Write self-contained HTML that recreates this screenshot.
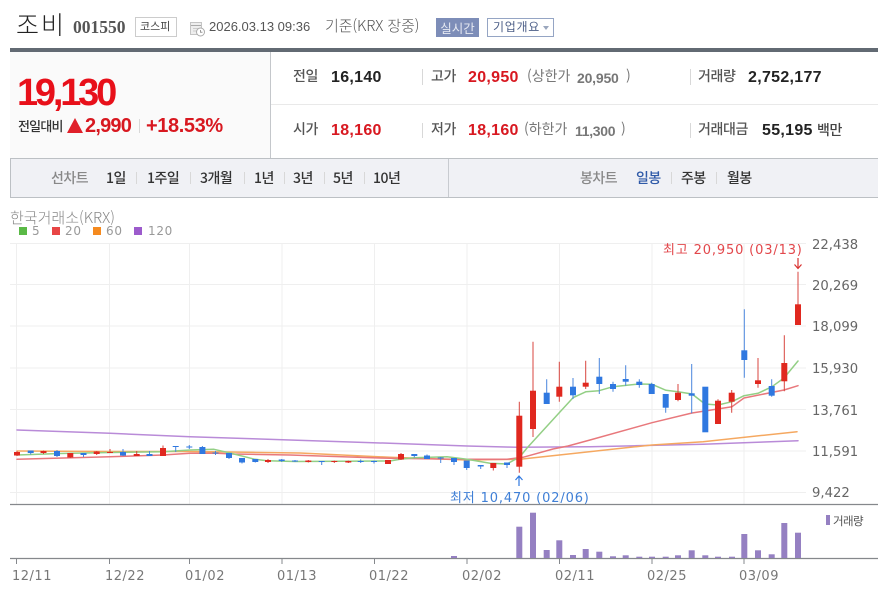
<!DOCTYPE html>
<html lang="ko"><head><meta charset="utf-8"><title>조비</title>
<style>
html,body{margin:0;padding:0;background:#fff}
body{width:878px;height:596px;overflow:hidden;position:relative;font-family:"Liberation Sans","NanumGothic","Noto Sans CJK KR",sans-serif}
#w{position:absolute;left:0;top:0;width:878px;height:596px;overflow:hidden;filter:blur(.35px)}
.t{position:absolute;white-space:nowrap;line-height:1}
.b{position:absolute}
.k{font-family:"Noto Sans CJK KR","NanumGothic",sans-serif}
.lbl{font-size:14px;font-weight:500;color:#555;letter-spacing:-.4px;font-family:"Noto Sans CJK KR",sans-serif}
.v{font-size:16px;font-weight:700;color:#222;letter-spacing:.3px}
.r{color:#d81820}
.g{font-size:14px;color:#777;font-weight:700}
.bar{position:absolute;width:1px;background:#d8d8d8}
.m{font-size:14px;font-weight:500;color:#333;letter-spacing:-.5px;font-family:"Noto Sans CJK KR",sans-serif}
svg text{font-family:"DejaVu Sans",sans-serif}
</style></head><body><div id="w">

<div class="t k" style="left:16px;top:12px;font-size:25px;font-weight:300;color:#222;letter-spacing:2px">조비</div>
<div class="t" style="left:73px;top:19px;font-family:'Liberation Serif',serif;font-weight:700;font-size:17.5px;color:#555">001550</div>
<div class="b" style="left:135px;top:17px;width:42px;height:20px;border:1px solid #ccc;box-sizing:border-box"></div>
<div class="t k" style="left:140px;top:21px;font-size:11px;color:#444">코스피</div>
<svg class="b" style="left:190px;top:22px" width="16" height="15" viewBox="0 0 16 15"><rect x=".5" y=".5" width="11" height="12" fill="#eee" stroke="#c4c4c4"/><line x1="1" y1="3.5" x2="11" y2="3.5" stroke="#aaa"/><line x1="3" y1="6.5" x2="8" y2="6.5" stroke="#ccc"/><line x1="3" y1="9" x2="6" y2="9" stroke="#ccc"/><circle cx="10.5" cy="10" r="4" fill="#fff" stroke="#aaa"/><path d="M10.5 8v2.3h2" fill="none" stroke="#999"/></svg>
<div class="t" style="left:209px;top:20px;font-size:13px;color:#555">2026.03.13 09:36</div>
<div class="t k" style="left:325px;top:18px;font-size:15px;font-weight:300;color:#555;letter-spacing:-.1px">기준(KRX 장중)</div>
<div class="t k" style="left:436px;top:18px;width:43px;height:19px;line-height:19px;background:#7d8db8;color:#e6e9f2;font-size:12.5px;text-align:center">실시간</div>
<div class="b" style="left:487px;top:18px;width:67px;height:19px;border:1px solid #95a5c4;box-sizing:border-box"></div>
<div class="t k" style="left:493px;top:21px;font-size:12px;color:#4d5f88;letter-spacing:.7px">기업개요</div>
<div class="b" style="left:543px;top:26px;border:3.5px solid transparent;border-top:4px solid #9aa6bd;border-bottom:0"></div>

<div class="b" style="left:10px;top:48px;width:868px;height:4px;background:#626a73"></div>
<div class="b" style="left:10px;top:52px;width:260px;height:106px;background:#fafafa"></div>
<div class="b" style="left:270px;top:52px;width:1px;height:106px;background:#c4c7cb"></div>
<div class="b" style="left:271px;top:104px;width:607px;height:1px;background:#e9e9e9"></div>

<div class="t r" style="left:17px;top:74px;font-size:38px;font-weight:700;letter-spacing:-3.2px;color:#e8101a">19,130</div>
<div class="t k" style="left:18px;top:119px;font-size:13px;font-weight:500;color:#333;letter-spacing:-.8px">전일대비</div>
<div class="b" style="left:67px;top:118px;border-left:8px solid transparent;border-right:8px solid transparent;border-bottom:15px solid #e0202a"></div>
<div class="t r" style="left:85px;top:116px;font-size:20px;font-weight:700;letter-spacing:-.8px">2,990</div>
<div class="bar" style="left:139px;top:119px;height:14px"></div>
<div class="t r" style="left:146px;top:116px;font-size:20px;font-weight:700;letter-spacing:-.4px">+18.53%</div>

<div class="t lbl" style="left:293px;top:69px">전일</div>
<div class="t v" style="left:331px;top:70px">16,140</div>
<div class="t lbl" style="left:293px;top:122px">시가</div>
<div class="t v r" style="left:331px;top:123px">18,160</div>

<div class="bar" style="left:422px;top:69px;height:16px"></div>
<div class="t lbl" style="left:431px;top:69px">고가</div>
<div class="t v r" style="left:468px;top:70px">20,950</div>
<div class="t g k" style="left:527px;top:69px;font-weight:400">(상한가</div>
<div class="t g" style="left:577px;top:71px;letter-spacing:-.2px">20,950</div>
<div class="t g k" style="left:626px;top:69px;font-weight:400">)</div>

<div class="bar" style="left:422px;top:123px;height:15px"></div>
<div class="t lbl" style="left:431px;top:122px">저가</div>
<div class="t v r" style="left:468px;top:123px">18,160</div>
<div class="t g k" style="left:524px;top:122px;font-weight:400">(하한가</div>
<div class="t g" style="left:575px;top:124px;letter-spacing:-.3px">11,300</div>
<div class="t g k" style="left:621px;top:122px;font-weight:400">)</div>

<div class="bar" style="left:690px;top:69px;height:16px"></div>
<div class="t lbl" style="left:698px;top:69px">거래량</div>
<div class="t v" style="left:748px;top:70px">2,752,177</div>
<div class="bar" style="left:690px;top:123px;height:15px"></div>
<div class="t lbl" style="left:698px;top:122px">거래대금</div>
<div class="t v" style="left:762px;top:123px">55,195</div>
<div class="t lbl" style="left:817px;top:123px;color:#444">백만</div>

<div class="b" style="left:10px;top:158px;width:868px;height:40px;background:#f0f1f5;border:solid #bcc0c4;border-width:1px 0 1px 1px;box-sizing:border-box"></div>
<div class="b" style="left:448px;top:159px;width:1px;height:38px;background:#c8cbd0"></div>
<div class="t m" style="left:51px;top:171px;color:#888">선차트</div>
<div class="t m" style="left:106px;top:171px">1일</div>
<div class="bar" style="left:136px;top:172px;height:12px"></div>
<div class="t m" style="left:147px;top:171px">1주일</div>
<div class="bar" style="left:190px;top:172px;height:12px"></div>
<div class="t m" style="left:200px;top:171px">3개월</div>
<div class="bar" style="left:244px;top:172px;height:12px"></div>
<div class="t m" style="left:254px;top:171px">1년</div>
<div class="bar" style="left:284px;top:172px;height:12px"></div>
<div class="t m" style="left:293px;top:171px">3년</div>
<div class="bar" style="left:324px;top:172px;height:12px"></div>
<div class="t m" style="left:333px;top:171px">5년</div>
<div class="bar" style="left:364px;top:172px;height:12px"></div>
<div class="t m" style="left:373px;top:171px">10년</div>
<div class="t m" style="left:580px;top:171px;color:#888">봉차트</div>
<div class="t m" style="left:636px;top:171px;color:#2f5aa8">일봉</div>
<div class="bar" style="left:671px;top:172px;height:12px"></div>
<div class="t m" style="left:681px;top:171px">주봉</div>
<div class="bar" style="left:716px;top:172px;height:12px"></div>
<div class="t m" style="left:727px;top:171px">월봉</div>

<svg class="b" style="left:0;top:200px" width="878" height="396" viewBox="0 200 878 396">
<text x="10" y="223" style="font-family:'Noto Sans CJK KR',sans-serif" font-size="15" font-weight="300" fill="#888">한국거래소(KRX)</text>
<rect x="19" y="227" width="8" height="8" fill="#5ab946"/><text x="32" y="235" font-size="12" fill="#999" letter-spacing=".7">5</text>
<rect x="52" y="227" width="8" height="8" fill="#e84545"/><text x="65" y="235" font-size="12" fill="#999" letter-spacing=".7">20</text>
<rect x="93" y="227" width="8" height="8" fill="#f58a1f"/><text x="106" y="235" font-size="12" fill="#999" letter-spacing=".7">60</text>
<rect x="134" y="227" width="8" height="8" fill="#9c5bcc"/><text x="148" y="235" font-size="12" fill="#999" letter-spacing=".7">120</text>

<g stroke="#efefef" stroke-width="1" fill="none">
<path d="M10 243.5H806M10 284.5H806M10 326H806M10 368H806M10 409.5H806M10 451H806M10 492.5H806"/>
<path d="M16.5 243V504M109.5 243V504M189.5 243V504M282 243V504M374.5 243V504M467 243V504M559.5 243V504M652 243V504M744 243V504"/>
</g>

<g fill="none" stroke-width="1.5" stroke-linejoin="round" stroke-linecap="round">
<path stroke="#b98bd8" d="M17 430L110 433.3L190 436.7L290 440L373 442.7L467 446L517 447.3L590 446.7L703 444.3L798 440.7"/>
<path stroke="#f5a860" d="M17 451L110 451.5L190 451.5L300 453L390 457.3L467 460L520 459.3L580 452.7L652 445L703 441.7L797 431.7"/>
<path stroke="#e8787c" d="M17 459.3L110 456.7L163 455L190 453.3L217 453.3L233 454L290 455L390 458.3L456 459.3L507 459.3L523 457.3L553 449L568 446L590 440L652 422.7L692 413L732 406.7L744 398L784 390L798 385.7"/>
<path stroke="#93cf85" d="M17 455L60 453.5L110 452.5L163 451.7L190 450L214 449.3L230 453L255 459.3L267 460.7L295 461.5L390 461L400 459.3L414 457.7L447 456.7L467 459.3L490 463.3L507 464L520 456.7L527 448L559 413L573 397.7L586 391.7L599 390.7L613 386.7L639 384L652 384.3L666 390.3L678 391.7L692 394L705 404L718 405L732 401.7L744 395.7L758 393.3L772 386.7L784 378L798 361"/>
</g>

<g stroke="#e0281f" fill="#e0281f" stroke-width="1">
<path fill="none" stroke="#d8453f" d="M17 451V456M43.5 450.5V454M70.3 453V458M96.7 451V455M110 449V453M136.7 451V456M163 445.5V456M268 459V463M308.3 460V462.5M334.3 460.5V463M348.3 460.5V463M388 460V464M401 453V460M493.3 463V470.5M519.3 401.7V472.7M533 341.7V437M559.3 361.7V401.7M585.7 360.7V389M678 384V401.3M718 399.3V424M731.7 390V412.7M758 358V387.7M784.3 335.3V391.3M798 271.7V325"/>
<g stroke="none">
<rect x="14" y="452" width="6" height="3.5"/><rect x="40.5" y="451" width="6" height="2"/><rect x="67.3" y="453" width="6" height="4.5"/><rect x="93.7" y="451.5" width="6" height="2.5"/><rect x="107" y="452" width="6" height="1"/><rect x="133.7" y="454" width="6" height="2"/><rect x="160" y="448" width="6" height="8"/><rect x="265" y="460" width="6" height="2"/><rect x="305.3" y="460.5" width="6" height="1.5"/><rect x="331.3" y="461" width="6" height="1"/><rect x="345.3" y="461" width="6" height="1.5"/><rect x="385" y="460" width="6" height="4"/><rect x="398" y="454" width="6" height="5.5"/><rect x="490.3" y="463" width="6" height="5"/><rect x="516.3" y="415.7" width="6" height="51"/><rect x="530" y="390.7" width="6" height="38.3"/><rect x="556.3" y="386.7" width="6" height="10"/><rect x="582.7" y="382.7" width="6" height="4"/><rect x="675" y="392.7" width="6" height="7.3"/><rect x="715" y="400.7" width="6" height="23.3"/><rect x="728.7" y="392.7" width="6" height="9"/><rect x="755" y="380.3" width="6" height="3.7"/><rect x="781.3" y="363" width="6" height="18.3"/><rect x="795" y="304.3" width="6" height="20.7"/>
</g>
</g>
<g stroke="#2f78e0" fill="#2f78e0" stroke-width="1">
<path fill="none" stroke="#4a86dd" d="M30.7 450.5V454.5M57 450V457M83.5 453V457M123 449V456M149.5 451V456M175.7 446V452M189.3 445V449M202.4 446V454M215.5 451V455M229 453V459M242 458V463.5M255.3 459V462.5M281.7 459V462M295 460V462M321.7 461V465M360.7 459.5V463M374 460.5V463.5M414.3 454V457.5M427 454.5V459M440.7 457V463M454 458V465M466.7 460.5V470M480.7 465V469M507 462.5V468M546.7 379.3V404M573 378V399M599.3 358V394M613 381.7V391.7M625.7 365.3V385.7M639.3 379.3V387.7M651.7 382.7V394M665.7 394V412.7M691.7 364V413.3M744.3 309.3V377.7M771.7 379.3V396.7"/>
<g stroke="none">
<rect x="27.7" y="450.5" width="6" height="2.5"/><rect x="54" y="451" width="6" height="5"/><rect x="80.5" y="453" width="6" height="2"/><rect x="120" y="452" width="6" height="3.5"/><rect x="146.5" y="454" width="6" height="2"/><rect x="172.7" y="446" width="6" height="1"/><rect x="186.3" y="446.5" width="6" height="1"/><rect x="199.4" y="447" width="6" height="7"/><rect x="212.5" y="452.5" width="6" height="1"/><rect x="226" y="453" width="6" height="5"/><rect x="239" y="458" width="6" height="4.5"/><rect x="252.3" y="459" width="6" height="3"/><rect x="278.7" y="459.5" width="6" height="1.5"/><rect x="292" y="460.5" width="6" height="1"/><rect x="318.7" y="461" width="6" height="1"/><rect x="357.7" y="461" width="6" height="1"/><rect x="371" y="461" width="6" height="1"/><rect x="411.3" y="454" width="6" height="2"/><rect x="424" y="455.5" width="6" height="3.5"/><rect x="437.7" y="457.5" width="6" height="1"/><rect x="451" y="458" width="6" height="4"/><rect x="463.7" y="460.5" width="6" height="7.5"/><rect x="477.7" y="465" width="6" height="1.5"/><rect x="504" y="462.5" width="6" height="2.5"/><rect x="543.7" y="392.7" width="6" height="11.3"/><rect x="570" y="386.7" width="6" height="8.6"/><rect x="596.3" y="376.7" width="6" height="7.3"/><rect x="610" y="384" width="6" height="5"/><rect x="622.7" y="379" width="6" height="2.7"/><rect x="636.3" y="381.7" width="6" height="3.3"/><rect x="648.7" y="384" width="6" height="10"/><rect x="662.7" y="394" width="6" height="13.7"/><rect x="688.7" y="393.3" width="6" height="2.4"/><rect x="702.3" y="386.7" width="6" height="45.6"/><rect x="741.3" y="350.3" width="6" height="9.7"/><rect x="768.7" y="386" width="6" height="9.7"/>
</g>
</g>

<text x="663" y="254" font-size="13" fill="#e2474b" letter-spacing=".85"><tspan style="font-family:'Noto Sans CJK KR',sans-serif">최고</tspan> 20,950 (03/13)</text>
<path d="M798 258V268M794.5 264.5L798 268.5L801.5 264.5" fill="none" stroke="#d8312f" stroke-width="1.2"/>
<text x="450" y="502" font-size="13" fill="#3f7fd6" letter-spacing=".85"><tspan style="font-family:'Noto Sans CJK KR',sans-serif">최저</tspan> 10,470 (02/06)</text>
<path d="M519 486V476M515.5 480L519 476L522.5 480" fill="none" stroke="#2f78e0" stroke-width="1.2"/>

<g font-size="13.2" fill="#666">
<text x="812" y="249">22,438</text><text x="812" y="290">20,269</text><text x="812" y="331">18,099</text><text x="812" y="373">15,930</text><text x="812" y="415">13,761</text><text x="812" y="456">11,591</text><text x="812" y="497">9,422</text>
</g>

<path d="M10 504.5H878" stroke="#85888c" stroke-width="1.2"/>
<path d="M10 558.5H878" stroke="#85888c" stroke-width="1.2"/>
<path d="M16.5 558V564M109.5 558V564M189.5 558V564M282 558V564M374.5 558V564M467 558V564M559.5 558V564M652 558V564M744 558V564" stroke="#85888c"/>

<g fill="#9580c2">
<rect x="451" y="556" width="6" height="2"/><rect x="516.3" y="526.7" width="6" height="31.3"/><rect x="530" y="512.7" width="6" height="45.3"/><rect x="543.7" y="550" width="6" height="8"/><rect x="556.3" y="540.3" width="6" height="17.7"/><rect x="570" y="555" width="6" height="3"/><rect x="582.7" y="549" width="6" height="9"/><rect x="596.3" y="551.7" width="6" height="6.3"/><rect x="610" y="556.3" width="6" height="1.7"/><rect x="622.7" y="555.3" width="6" height="2.7"/><rect x="636.3" y="556.7" width="6" height="1.3"/><rect x="649" y="556.7" width="6" height="1.3"/><rect x="662.7" y="556.7" width="6" height="1.3"/><rect x="675" y="555.3" width="6" height="2.7"/><rect x="688.7" y="550.3" width="6" height="7.7"/><rect x="702.3" y="555.3" width="6" height="2.7"/><rect x="715" y="556.7" width="6" height="1.3"/><rect x="729" y="556.7" width="6" height="1.3"/><rect x="741.3" y="534" width="6" height="24"/><rect x="755" y="550.3" width="6" height="7.7"/><rect x="768.7" y="554.3" width="6" height="3.7"/><rect x="781.3" y="523" width="6" height="35"/><rect x="795" y="532.7" width="6" height="25.3"/>
<rect x="826" y="515" width="4" height="10"/>
</g>
<text x="833" y="525" style="font-family:'Noto Sans CJK KR',sans-serif" font-size="11.5" fill="#555" letter-spacing="-.6">거래량</text>

<g font-size="13" fill="#777" letter-spacing=".5">
<text x="12" y="580">12/11</text><text x="105" y="580">12/22</text><text x="185" y="580">01/02</text><text x="277" y="580">01/13</text><text x="369" y="580">01/22</text><text x="462" y="580">02/02</text><text x="555" y="580">02/11</text><text x="647" y="580">02/25</text><text x="739" y="580">03/09</text>
</g>
</svg>
</div></body></html>
